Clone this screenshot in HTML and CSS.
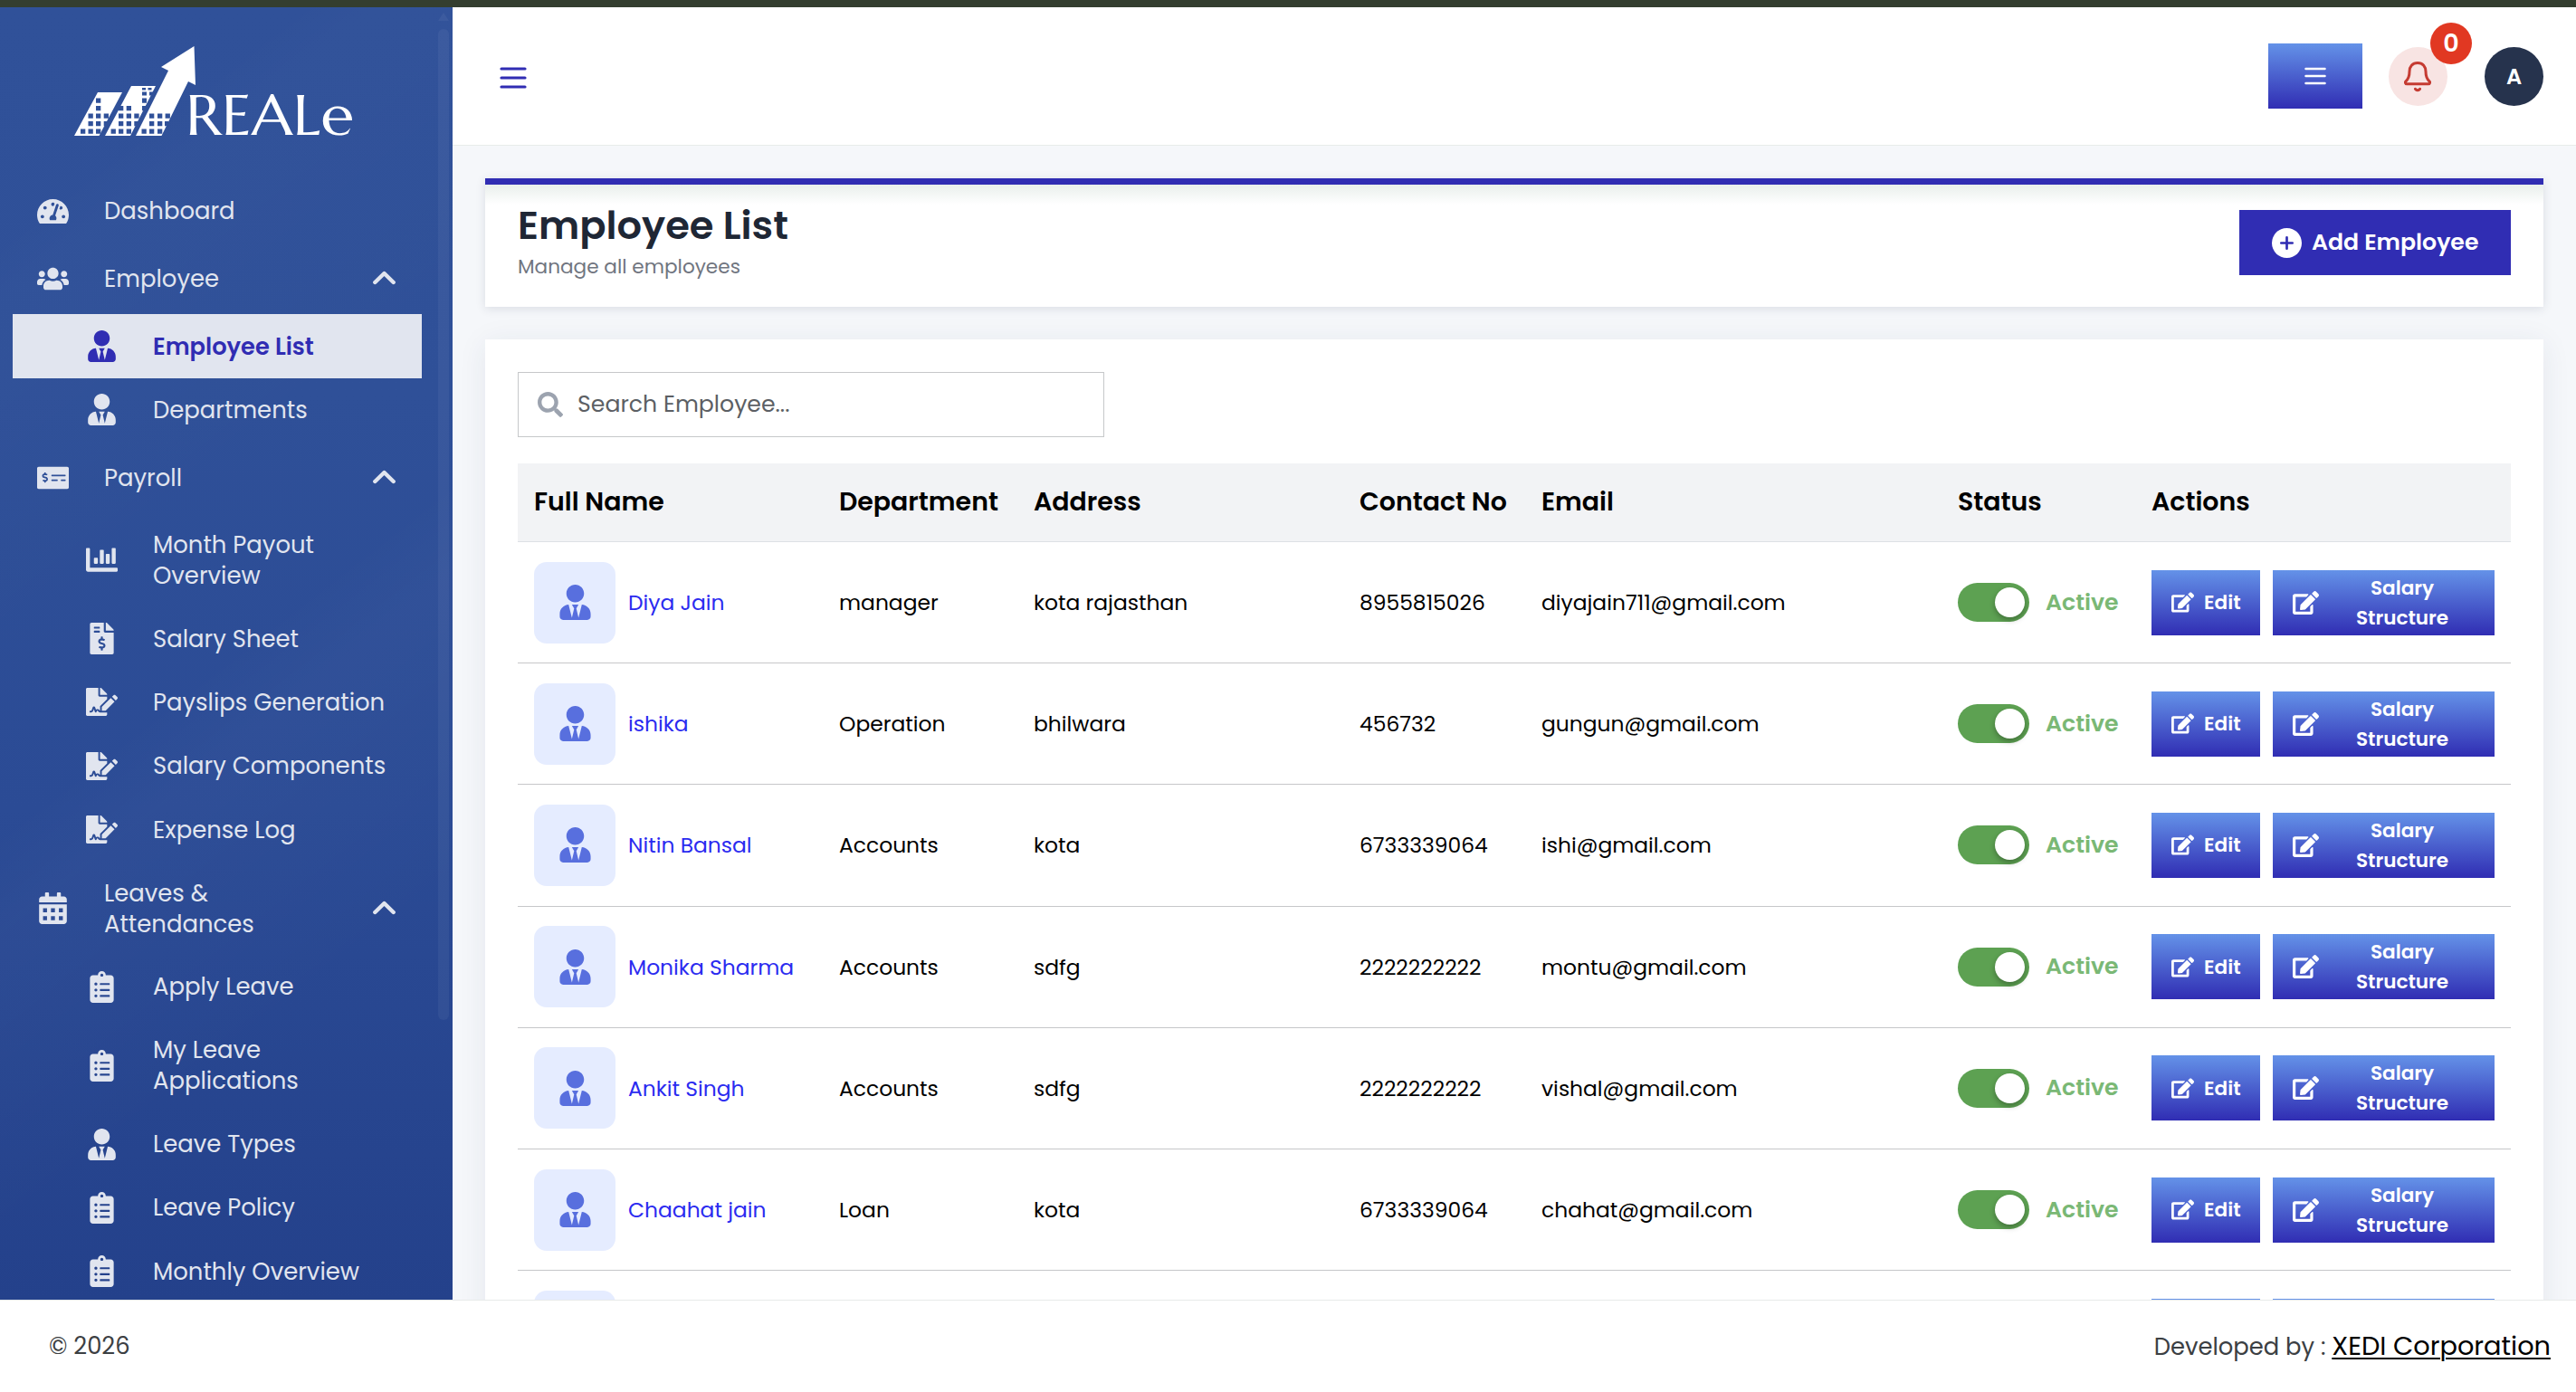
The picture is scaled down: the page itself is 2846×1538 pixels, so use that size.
FILE: index.html
```
<!DOCTYPE html>
<html lang="en">
<head>
    <meta charset="UTF-8">
    <meta name="viewport" content="width=device-width, initial-scale=1.0">
    <title>Employee List</title>
    <link rel="stylesheet" href="styles.css">
</head>
<body>
    <!-- Icon set -->
    <svg class="icon-defs" xmlns="http://www.w3.org/2000/svg">
        <symbol id="i-gauge" viewBox="0 0 576 512"><path d="M288 32C128.94 32 0 160.94 0 320c0 52.8 14.25 102.26 39.06 144.8 5.61 9.62 16.3 15.2 27.44 15.2h443c11.14 0 21.83-5.58 27.44-15.2C561.75 422.26 576 372.8 576 320c0-159.06-128.94-288-288-288zm0 64c14.71 0 26.58 10.13 30.32 23.65-1.11 2.26-2.64 4.23-3.45 6.67l-9.22 27.67c-5.13 3.49-10.97 6.01-17.64 6.01-17.67 0-32-14.33-32-32S270.33 96 288 96zM96 384c-17.67 0-32-14.33-32-32s14.33-32 32-32 32 14.33 32 32-14.33 32-32 32zm48-160c-17.67 0-32-14.33-32-32s14.33-32 32-32 32 14.33 32 32-14.33 32-32 32zm246.77-72.41l-61.33 184C343.13 347.33 352 364.54 352 384c0 11.72-3.38 22.55-8.88 32H232.88c-5.5-9.45-8.88-20.28-8.88-32 0-33.94 26.5-61.43 59.9-63.59l61.34-184.01c4.17-12.56 17.73-19.45 30.36-15.17 12.57 4.19 19.35 17.79 15.17 30.36zm14.66 57.2l15.52-46.55c3.47-1.29 7.13-2.23 11.05-2.23 17.67 0 32 14.33 32 32s-14.33 32-32 32c-11.38-.01-20.89-6.28-26.57-15.22zM480 384c-17.67 0-32-14.33-32-32s14.33-32 32-32 32 14.33 32 32-14.33 32-32 32z"/></symbol>
        <symbol id="i-users" viewBox="0 0 640 512"><path d="M96 224c35.3 0 64-28.7 64-64s-28.7-64-64-64-64 28.7-64 64 28.7 64 64 64zm448 0c35.3 0 64-28.7 64-64s-28.7-64-64-64-64 28.7-64 64 28.7 64 64 64zm32 32h-64c-17.6 0-33.5 7.1-45.1 18.6 40.3 22.1 68.9 62 75.1 109.4h66c17.7 0 32-14.3 32-32v-32c0-35.3-28.7-64-64-64zm-256 0c61.9 0 112-50.1 112-112S381.9 32 320 32 208 82.1 208 144s50.1 112 112 112zm76.8 32h-8.3c-20.8 10-43.9 16-68.5 16s-47.6-6-68.5-16h-8.3C179.6 288 128 339.6 128 403.2V432c0 26.5 21.5 48 48 48h288c26.5 0 48-21.5 48-48v-28.8c0-63.6-51.6-115.2-115.2-115.2zm-223.7-13.4C161.5 263.1 145.6 256 128 256H64c-35.3 0-64 28.7-64 64v32c0 17.7 14.3 32 32 32h65.9c6.3-47.4 34.9-87.3 75.2-109.4z"/></symbol>
        <symbol id="i-user" viewBox="0 0 448 512"><path d="M224 256c70.7 0 128-57.3 128-128S294.7 0 224 0 96 57.3 96 128s57.3 128 128 128zm95.8 32.6L272 480l-32-136 32-56h-96l32 56-32 136-47.8-191.4C56.9 292 0 350.3 0 422.4V464c0 26.5 21.5 48 48 48h352c26.5 0 48-21.5 48-48v-41.6c0-72.1-56.9-130.4-128.2-133.8z"/></symbol>
        <symbol id="i-check" viewBox="0 0 640 512"><path d="M608 32H32C14.33 32 0 46.33 0 64v384c0 17.67 14.33 32 32 32h576c17.67 0 32-14.33 32-32V64c0-17.67-14.33-32-32-32zM176 327.88V344c0 4.42-3.58 8-8 8h-16c-4.42 0-8-3.58-8-8v-16.29c-11.29-.58-22.27-4.52-31.37-11.35-3.9-2.93-4.1-8.77-.57-12.14l11.75-11.21c2.77-2.64 6.89-2.76 10.13-.73 3.87 2.42 8.26 3.72 12.82 3.72h28.11c6.5 0 11.8-5.92 11.8-13.19 0-5.95-3.61-11.19-8.77-12.73l-45-13.5c-18.59-5.58-31.58-23.42-31.58-43.39 0-24.52 19.05-44.44 42.67-45.07V152c0-4.42 3.58-8 8-8h16c4.42 0 8 3.58 8 8v16.29c11.29.58 22.27 4.51 31.37 11.35 3.9 2.93 4.1 8.77.57 12.14l-11.75 11.21c-2.77 2.64-6.89 2.76-10.13.73-3.87-2.43-8.26-3.72-12.82-3.72h-28.11c-6.5 0-11.8 5.92-11.8 13.19 0 5.95 3.61 11.19 8.77 12.73l45 13.5c18.59 5.58 31.58 23.42 31.58 43.39 0 24.53-19.05 44.44-42.67 45.07zM416 312c0 4.42-3.58 8-8 8H296c-4.42 0-8-3.58-8-8v-16c0-4.42 3.58-8 8-8h112c4.42 0 8 3.58 8 8v16zm160 0c0 4.42-3.58 8-8 8h-80c-4.42 0-8-3.58-8-8v-16c0-4.42 3.58-8 8-8h80c4.42 0 8 3.58 8 8v16zm0-96c0 4.42-3.58 8-8 8H296c-4.42 0-8-3.58-8-8v-16c0-4.42 3.58-8 8-8h272c4.42 0 8 3.58 8 8v16z"/></symbol>
        <symbol id="i-chart" viewBox="0 0 512 512"><path d="M332.8 320h38.4c6.4 0 12.8-6.4 12.8-12.8V172.8c0-6.4-6.4-12.8-12.8-12.8h-38.4c-6.4 0-12.8 6.4-12.8 12.8v134.4c0 6.4 6.4 12.8 12.8 12.8zm96 0h38.4c6.4 0 12.8-6.4 12.8-12.8V76.8c0-6.4-6.4-12.8-12.8-12.8h-38.4c-6.4 0-12.8 6.4-12.8 12.8v230.4c0 6.4 6.4 12.8 12.8 12.8zm-288 0h38.4c6.4 0 12.8-6.4 12.8-12.8v-70.4c0-6.4-6.4-12.8-12.8-12.8h-38.4c-6.4 0-12.8 6.4-12.8 12.8v70.4c0 6.4 6.4 12.8 12.8 12.8zm96 0h38.4c6.4 0 12.8-6.4 12.8-12.8V108.8c0-6.4-6.4-12.8-12.8-12.8h-38.4c-6.4 0-12.8 6.4-12.8 12.8v198.4c0 6.4 6.4 12.8 12.8 12.8zM496 384H64V80c0-8.84-7.16-16-16-16H16C7.16 64 0 71.16 0 80v336c0 17.67 14.33 32 32 32h464c8.84 0 16-7.16 16-16v-32c0-8.84-7.16-16-16-16z"/></symbol>
        <symbol id="i-invoice" viewBox="0 0 384 512"><path d="M377 105L279.1 7c-4.5-4.5-10.6-7-17-7H256v128h128v-6.1c0-6.3-2.5-12.4-7-16.9zm-153 31V0H24C10.7 0 0 10.7 0 24v464c0 13.3 10.7 24 24 24h336c13.3 0 24-10.7 24-24V160H248c-13.2 0-24-10.8-24-24zM64 72c0-4.42 3.58-8 8-8h80c4.42 0 8 3.58 8 8v16c0 4.42-3.58 8-8 8H72c-4.42 0-8-3.58-8-8V72zm0 80v-16c0-4.42 3.58-8 8-8h80c4.42 0 8 3.58 8 8v16c0 4.42-3.58 8-8 8H72c-4.42 0-8-3.58-8-8zm144 263.88V440c0 4.42-3.58 8-8 8h-16c-4.42 0-8-3.58-8-8v-24.29c-11.29-.58-22.27-4.52-31.37-11.35-3.9-2.93-4.1-8.77-.57-12.14l11.75-11.21c2.77-2.64 6.89-2.76 10.13-.73 3.87 2.42 8.26 3.72 12.82 3.72h28.11c6.5 0 11.8-5.92 11.8-13.19 0-5.95-3.61-11.19-8.77-12.73l-45-13.5c-18.59-5.58-31.58-23.42-31.58-43.39 0-24.52 19.05-44.44 42.67-45.07V232c0-4.42 3.58-8 8-8h16c4.42 0 8 3.58 8 8v24.29c11.29.58 22.27 4.51 31.37 11.35 3.9 2.93 4.1 8.77.57 12.14l-11.75 11.21c-2.77 2.64-6.89 2.76-10.13.73-3.87-2.43-8.26-3.72-12.82-3.72h-28.11c-6.5 0-11.8 5.92-11.8 13.19 0 5.95 3.61 11.19 8.77 12.73l45 13.5c18.59 5.58 31.58 23.42 31.58 43.39 0 24.53-19.05 44.44-42.67 45.07z"/></symbol>
        <symbol id="i-sign" viewBox="0 0 576 512"><path d="M218.17 424.14c-2.95-5.92-8.09-6.52-10.17-6.52s-7.22.59-10.02 6.19l-7.67 15.34c-6.37 12.78-25.03 11.37-29.48-2.09L144 386.59l-10.61 31.88c-5.89 17.66-22.38 29.53-41 29.53H80c-8.84 0-16-7.16-16-16s7.16-16 16-16h12.39c4.83 0 9.11-3.08 10.64-7.66l18.19-54.64c3.3-9.81 12.44-16.41 22.78-16.41s19.48 6.59 22.77 16.41l13.88 41.64c19.75-16.19 54.06-9.7 66 14.16 1.89 3.78 5.49 5.95 9.36 6.26v-82.12l128-127.09V160H248c-13.2 0-24-10.8-24-24V0H24C10.7 0 0 10.7 0 24v464c0 13.3 10.7 24 24 24h336c13.3 0 24-10.7 24-24v-40l-128-.11c-16.12-.31-30.58-9.28-37.83-23.75zM384 121.9c0-6.3-2.5-12.4-7-16.9L279.1 7c-4.5-4.5-10.6-7-17-7H256v128h128v-6.1zm-96 225.06V416h68.99l161.68-162.78-67.88-67.88L288 346.96zm280.54-179.63l-31.87-31.87c-9.94-9.94-26.07-9.94-36.01 0l-27.25 27.25 67.88 67.88 27.25-27.25c9.95-9.94 9.95-26.07 0-36.01z"/></symbol>
        <symbol id="i-calendar" viewBox="0 0 448 512"><path d="M0 464c0 26.5 21.5 48 48 48h352c26.5 0 48-21.5 48-48V192H0v272zM320 256h64v64h-64zM320 384h64v64h-64zM192 256h64v64h-64zM192 384h64v64h-64zM64 256h64v64H64zM64 384h64v64H64zM400 64h-48V16c0-8.8-7.2-16-16-16h-32c-8.8 0-16 7.2-16 16v48H160V16c0-8.8-7.2-16-16-16h-32c-8.8 0-16 7.2-16 16v48H48C21.5 64 0 85.5 0 112v48h448v-48c0-26.5-21.5-48-48-48z" fill-rule="evenodd"/></symbol>
        <symbol id="i-clipboard" viewBox="0 0 384 512"><path d="M336 64h-80c0-35.3-28.7-64-64-64s-64 28.7-64 64H48C21.5 64 0 85.5 0 112v352c0 26.5 21.5 48 48 48h288c26.5 0 48-21.5 48-48V112c0-26.5-21.5-48-48-48zM96 424c-13.3 0-24-10.7-24-24s10.7-24 24-24 24 10.7 24 24-10.7 24-24 24zm0-96c-13.3 0-24-10.7-24-24s10.7-24 24-24 24 10.7 24 24-10.7 24-24 24zm0-96c-13.3 0-24-10.7-24-24s10.7-24 24-24 24 10.7 24 24-10.7 24-24 24zm96-192c13.3 0 24 10.7 24 24s-10.7 24-24 24-24-10.7-24-24 10.7-24 24-24zm128 368c0 4.4-3.6 8-8 8H168c-4.4 0-8-3.6-8-8v-16c0-4.4 3.6-8 8-8h144c4.4 0 8 3.6 8 8v16zm0-96c0 4.4-3.6 8-8 8H168c-4.4 0-8-3.6-8-8v-16c0-4.4 3.6-8 8-8h144c4.4 0 8 3.6 8 8v16zm0-96c0 4.4-3.6 8-8 8H168c-4.4 0-8-3.6-8-8v-16c0-4.4 3.6-8 8-8h144c4.4 0 8 3.6 8 8v16z"/></symbol>
        <symbol id="i-edit" viewBox="0 0 576 512"><path d="M402.6 83.2l90.2 90.2c3.8 3.8 3.8 10 0 13.8L274.4 405.6l-92.8 10.3c-12.4 1.4-22.9-9.1-21.5-21.5l10.3-92.8L388.8 83.2c3.8-3.8 10-3.8 13.8 0zm162-22.9l-48.8-48.8c-15.2-15.2-39.9-15.2-55.2 0l-35.4 35.4c-3.8 3.8-3.8 10 0 13.8l90.2 90.2c3.8 3.8 10 3.8 13.8 0l35.4-35.4c15.2-15.3 15.2-40 0-55.2zM384 346.2V448H64V128h229.8c3.2 0 6.2-1.3 8.5-3.5l40-40c7.6-7.6 2.2-20.5-8.5-20.5H48C21.5 64 0 85.5 0 112v352c0 26.5 21.5 48 48 48h352c26.5 0 48-21.5 48-48V306.2c0-10.7-12.9-16-20.5-8.5l-40 40c-2.2 2.3-3.5 5.3-3.5 8.5z"/></symbol>
        <symbol id="i-search" viewBox="0 0 512 512"><path d="M505 442.7L405.3 343c-4.5-4.5-10.6-7-17-7H372c27.6-35.3 44-79.7 44-128C416 93.1 322.9 0 208 0S0 93.1 0 208s93.1 208 208 208c48.3 0 92.7-16.4 128-44v16.3c0 6.4 2.5 12.5 7 17l99.7 99.7c9.4 9.4 24.6 9.4 33.9 0l28.3-28.3c9.4-9.4 9.4-24.6.1-34zM208 336c-70.7 0-128-57.2-128-128 0-70.7 57.2-128 128-128 70.7 0 128 57.2 128 128 0 70.7-57.2 128-128 128z"/></symbol>
        <symbol id="i-chevron" viewBox="0 0 25 16"><path d="M2.3 13 12.5 3l10.2 10" fill="none" stroke="currentColor" stroke-width="4.4" stroke-linejoin="round" stroke-linecap="round"/></symbol>
    </svg>

    <div class="layout">
        <aside class="sidebar">
            <svg class="logo" viewBox="80 40 330 120">
                <path d="M214.5 51 216 94l-8-4-29.5 60H150l36-72-8-4z"/>
                <path d="M108 102h27l-25.5 48H82zM145 95h27l-28 55h-28z"/>
                <g class="logo-windows">
                    <path d="M106 108.5h5.3v5.3H106zM106 117h5.3v5.3H106zM97.5 125.5h5.3v5.3h-5.3zM106 125.5h5.3v5.3H106zM114.7 125.5h5.3v5.3h-5.3zM97.5 134h5.3v5.3h-5.3zM106 134h5.3v5.3H106zM114.7 134h4v5.3h-4zM89 142.5h5.3v5.3H89zM97.5 142.5h5.3v5.3h-5.3zM106 142.5h5.3v5.3H106z"/>
                    <path d="M131 117h5.3v5.3H131zM139.7 117h5.3v5.3h-5.3zM131 125.5h5.3v5.3H131zM139.7 125.5h5.3v5.3h-5.3zM148.3 125.5h5.3v5.3h-5.3zM131 134h5.3v5.3H131zM139.7 134h5.3v5.3h-5.3zM148.3 134h4v5.3h-4zM122.6 142.5h5.3v5.3h-5.3zM131 142.5h5.3v5.3H131zM139.7 142.5h5.3v5.3h-5.3z"/>
                    <path d="M157 97h4v2.4h-4zM163.5 97h4v2.4h-4zM157 101.5h5v4h-5zM157 108.5h5v5.3h-5zM165 101.5h5v4h-5zM157 117h4.500v5.3H157z"/>
                    <path d="M165 125.5h5.3v5.3H165zM174 125.5h5.3v5.3H174zM182.600 125.5h5.3v5.3h-5.3zM165 134h5.3v5.3H165zM174 134h5.3v5.3H174zM182 134h4v5.3h-4zM156.500 142.5h5.3v5.3h-5.3zM165 142.5h5.3v5.3H165zM174 142.5h5.3v5.3H174z"/>
                </g>
                <text x="205" y="149" textLength="186" lengthAdjust="spacingAndGlyphs">REALe</text>
            </svg>

            <nav class="menu">
                <a class="item"><svg class="ic w35"><use href="#i-gauge"/></svg><span>Dashboard</span></a>
                <a class="item"><svg class="ic w35 h28"><use href="#i-users"/></svg><span>Employee</span><svg class="chev"><use href="#i-chevron"/></svg></a>
                <div class="sub">
                    <a class="item active"><svg class="ic w31"><use href="#i-user"/></svg><span>Employee List</span></a>
                    <a class="item"><svg class="ic w31"><use href="#i-user"/></svg><span>Departments</span></a>
                </div>
                <a class="item"><svg class="ic w35 h28"><use href="#i-check"/></svg><span>Payroll</span><svg class="chev"><use href="#i-chevron"/></svg></a>
                <div class="sub">
                    <a class="item"><svg class="ic w35"><use href="#i-chart"/></svg><span>Month Payout Overview</span></a>
                    <a class="item"><svg class="ic w27"><use href="#i-invoice"/></svg><span>Salary Sheet</span></a>
                    <a class="item"><svg class="ic w35"><use href="#i-sign"/></svg><span>Payslips Generation</span></a>
                    <a class="item"><svg class="ic w35"><use href="#i-sign"/></svg><span>Salary Components</span></a>
                    <a class="item"><svg class="ic w35"><use href="#i-sign"/></svg><span>Expense Log</span></a>
                </div>
                <a class="item two"><svg class="ic w31"><use href="#i-calendar"/></svg><span>Leaves &amp; Attendances</span><svg class="chev"><use href="#i-chevron"/></svg></a>
                <div class="sub">
                    <a class="item"><svg class="ic w27"><use href="#i-clipboard"/></svg><span>Apply Leave</span></a>
                    <a class="item"><svg class="ic w27"><use href="#i-clipboard"/></svg><span>My Leave Applications</span></a>
                    <a class="item"><svg class="ic w31"><use href="#i-user"/></svg><span>Leave Types</span></a>
                    <a class="item"><svg class="ic w27"><use href="#i-clipboard"/></svg><span>Leave Policy</span></a>
                    <a class="item"><svg class="ic w27"><use href="#i-clipboard"/></svg><span>Monthly Overview</span></a>
                </div>
            </nav>
            <div class="scroll-arrow"></div>
            <div class="scroll-thumb"></div>
        </aside>

        <main>
            <header class="topbar">
                <svg class="burger" viewBox="0 0 30 24"><path d="M2 2h26M2 12h26M2 22h26"/></svg>
                <div class="topbar-right">
                    <button class="menu-btn"><svg viewBox="0 0 24 20"><path d="M1.500 2h21M1.500 10h21M1.500 18h21"/></svg></button>
                    <div class="bell">
                        <svg viewBox="0 0 30 34"><path d="M15 1.500c-5.800 0-9 4.300-9 9.500 0 6.500-1.600 8.600-4 10.800-1 1-.6 3 1.200 3h23.600c1.800 0 2.200-2 1.200-3-2.400-2.200-4-4.300-4-10.800 0-5.200-3.200-9.500-9-9.500zM12.500 30.300c1.300 1.900 3.700 1.900 5 0"/></svg>
                        <span class="badge">0</span>
                    </div>
                    <div class="avatar">A</div>
                </div>
            </header>

            <section class="page-head">
                <div>
                    <h1>Employee List</h1>
                    <p>Manage all employees</p>
                </div>
                <button class="add-btn"><svg viewBox="0 0 32 32"><circle cx="16" cy="16" r="16"/><path d="M16 10v12M10 16h12"/></svg>Add Employee</button>
            </section>

            <section class="card">
                <div class="search"><svg><use href="#i-search"/></svg><span>Search Employee...</span></div>
                <table>
                    <colgroup><col class="c-name"><col class="c-dept"><col class="c-addr"><col class="c-phone"><col class="c-mail"><col class="c-status"><col class="c-act"></colgroup>
                    <thead>
                        <tr><th>Full Name</th><th>Department</th><th>Address</th><th>Contact No</th><th>Email</th><th>Status</th><th>Actions</th></tr>
                    </thead>
                    <tbody>
                        <tr>
                            <td><div class="name"><span class="pic"><svg><use href="#i-user"/></svg></span>Diya Jain</div></td>
                            <td>manager</td><td>kota rajasthan</td><td>8955815026</td><td>diyajain711@gmail.com</td>
                            <td><div class="status"><span class="toggle"></span>Active</div></td>
                            <td><div class="actions"><button class="edit"><svg><use href="#i-edit"/></svg>Edit</button><button class="salary"><svg><use href="#i-edit"/></svg><span>Salary Structure</span></button></div></td>
                        </tr>
                        <tr>
                            <td><div class="name"><span class="pic"><svg><use href="#i-user"/></svg></span>ishika</div></td>
                            <td>Operation</td><td>bhilwara</td><td>456732</td><td>gungun@gmail.com</td>
                            <td><div class="status"><span class="toggle"></span>Active</div></td>
                            <td><div class="actions"><button class="edit"><svg><use href="#i-edit"/></svg>Edit</button><button class="salary"><svg><use href="#i-edit"/></svg><span>Salary Structure</span></button></div></td>
                        </tr>
                        <tr>
                            <td><div class="name"><span class="pic"><svg><use href="#i-user"/></svg></span>Nitin Bansal</div></td>
                            <td>Accounts</td><td>kota</td><td>6733339064</td><td>ishi@gmail.com</td>
                            <td><div class="status"><span class="toggle"></span>Active</div></td>
                            <td><div class="actions"><button class="edit"><svg><use href="#i-edit"/></svg>Edit</button><button class="salary"><svg><use href="#i-edit"/></svg><span>Salary Structure</span></button></div></td>
                        </tr>
                        <tr>
                            <td><div class="name"><span class="pic"><svg><use href="#i-user"/></svg></span>Monika Sharma</div></td>
                            <td>Accounts</td><td>sdfg</td><td>2222222222</td><td>montu@gmail.com</td>
                            <td><div class="status"><span class="toggle"></span>Active</div></td>
                            <td><div class="actions"><button class="edit"><svg><use href="#i-edit"/></svg>Edit</button><button class="salary"><svg><use href="#i-edit"/></svg><span>Salary Structure</span></button></div></td>
                        </tr>
                        <tr>
                            <td><div class="name"><span class="pic"><svg><use href="#i-user"/></svg></span>Ankit Singh</div></td>
                            <td>Accounts</td><td>sdfg</td><td>2222222222</td><td>vishal@gmail.com</td>
                            <td><div class="status"><span class="toggle"></span>Active</div></td>
                            <td><div class="actions"><button class="edit"><svg><use href="#i-edit"/></svg>Edit</button><button class="salary"><svg><use href="#i-edit"/></svg><span>Salary Structure</span></button></div></td>
                        </tr>
                        <tr>
                            <td><div class="name"><span class="pic"><svg><use href="#i-user"/></svg></span>Chaahat jain</div></td>
                            <td>Loan</td><td>kota</td><td>6733339064</td><td>chahat@gmail.com</td>
                            <td><div class="status"><span class="toggle"></span>Active</div></td>
                            <td><div class="actions"><button class="edit"><svg><use href="#i-edit"/></svg>Edit</button><button class="salary"><svg><use href="#i-edit"/></svg><span>Salary Structure</span></button></div></td>
                        </tr>
                        <tr>
                            <td><div class="name"><span class="pic"></span></div></td>
                            <td></td><td></td><td></td><td></td><td></td>
                            <td><div class="actions"><button class="edit"></button><button class="salary"></button></div></td>
                        </tr>
                    </tbody>
                </table>
            </section>
        </main>
    </div>

    <footer>
        <span>© 2026</span>
        <span>Developed by : <a>XEDI Corporation</a></span>
    </footer>
</body>
</html>
```
FILE: styles.css
```
* {
    margin: 0;
    padding: 0;
    box-sizing: border-box;
}

body {
    height: 100vh;
    display: flex;
    flex-direction: column;
    overflow: hidden;
    border-top: 8px solid #343e2f;
    background: #f5f7fa;
    color: #000;
    font-family: Poppins, Inter, sans-serif;
}

button {
    border: none;
    font-family: inherit;
    color: #fff;
}

.icon-defs {
    display: none;
}

.layout {
    height: 1428px;
    flex: none;
    display: flex;
    overflow: hidden;
}

/* Sidebar */
.sidebar {
    position: relative;
    flex: none;
    width: 500px;
    overflow: hidden;
    color: #e1e5ef;
    background:
        linear-gradient(142deg, rgba(255,255,255,0) 14%, rgba(255,255,255,0.01) 18%, rgba(255,255,255,0) 42%, rgba(255,255,255,0) 50%, rgba(255,255,255,0.018) 56%, rgba(255,255,255,0) 76%),
        linear-gradient(#305199, #2f5098 30%, #2b4b95 62%, #24418b);
}

.logo {
    display: block;
    width: 330px;
    height: 120px;
    margin: 32px 0 0 80px;
    overflow: visible;
    fill: #fff;
}

.logo-windows {
    fill: #305199;
}

.logo text {
    font-family: Marcellus, Optima, Lato, sans-serif;
    font-size: 63px;
}

.menu {
    margin-top: 38px;
    padding: 0 34px 0 14px;
}

.item {
    display: flex;
    align-items: center;
    min-height: 70.5px;
    margin-bottom: 4.2px;
    padding-left: 26px;
    font-size: 25.9px;
    line-height: 34px;
}

.item.two {
    min-height: 99px;
}

.item.two span {
    width: 200px;
}

.sub .item {
    margin-bottom: 0;
    padding: 17.7px 20px 17.7px 80px;
    min-height: 0;
}

.sub {
    margin-bottom: 4.2px;
}

.sub + .item.two {
    margin-top: -2px;
    margin-bottom: 2px;
}

.item.active {
    background: #e1e5ef;
    color: #302db3;
    font-weight: 600;
    font-size: 25.7px;
}

.ic {
    flex: none;
    height: 35px;
    fill: currentColor;
}

.w35 {
    width: 35px;
    margin: 0 39px 0 1px;
}

.h28 {
    height: 28px;
}

.w31 {
    width: 31px;
    margin: 0 41px 0 3px;
}

.w27 {
    width: 27px;
    margin: 0 43px 0 5px;
}

.chev {
    width: 25px;
    height: 16px;
    margin: 0 29px 2px auto;
}

.scroll-thumb,
.scroll-arrow {
    position: absolute;
    right: 4px;
}

.scroll-arrow {
    top: 6px;
    border: 6px solid transparent;
    border-top: none;
    border-bottom: 9px solid rgba(255,255,255,0.05);
}

.scroll-thumb {
    top: 24px;
    width: 12px;
    height: 1095px;
    border-radius: 6px;
    background: rgba(255,255,255,0.05);
}

/* Top bar */
main {
    flex: 1;
    min-width: 0;
}

.topbar {
    height: 153px;
    display: flex;
    justify-content: space-between;
    padding: 40px 36px 0 52px;
    background: #fff;
    border-bottom: 1px solid #e8ecea;
}

.burger {
    width: 30px;
    height: 24px;
    margin-top: 26px;
    stroke: #302db3;
    stroke-width: 3.2;
    stroke-linecap: round;
}

.topbar-right {
    display: flex;
    align-items: flex-start;
}

.menu-btn,
.actions button {
    background: linear-gradient(#6492e8, #302db3);
}

.menu-btn {
    display: flex;
    align-items: center;
    justify-content: center;
    width: 104px;
    height: 72px;
    margin-right: 29px;
}

.menu-btn svg {
    width: 24px;
    height: 20px;
    stroke: #fff;
    stroke-width: 2.5;
    stroke-linecap: round;
}

.bell,
.avatar {
    position: relative;
    display: flex;
    align-items: center;
    justify-content: center;
    width: 65px;
    height: 65px;
    margin-top: 4px;
    border-radius: 50%;
}

.bell {
    margin-right: 41px;
    background: #f8e4e3;
}

.bell svg {
    width: 30px;
    height: 34px;
    margin-right: 1px;
    fill: none;
    stroke: #c53b32;
    stroke-width: 3;
    stroke-linecap: round;
}

.badge {
    position: absolute;
    top: -27px;
    right: -27px;
    width: 46px;
    height: 46px;
    border-radius: 50%;
    background: #e13822;
    color: #fff;
    font-size: 27px;
    font-weight: 600;
    line-height: 46px;
    text-align: center;
}

.avatar {
    background: #26334d;
    color: #fff;
    font-size: 24px;
    font-weight: 600;
}

/* Page header */
.page-head {
    display: flex;
    align-items: flex-start;
    justify-content: space-between;
    height: 142px;
    margin: 36px 36px 0;
    padding: 21px 36px 0;
    border-top: 7px solid #302db3;
    background: linear-gradient(#e9efec, #fff 22px);
    box-shadow: 0 2px 10px rgba(40,50,80,0.13);
}

h1 {
    color: #1f2735;
    font-size: 43.2px;
    font-weight: 600;
    line-height: 48px;
}

.page-head p {
    margin-top: 7px;
    color: #70757f;
    font-size: 21.6px;
    line-height: 30px;
}

.add-btn {
    display: flex;
    align-items: center;
    gap: 11px;
    width: 300px;
    height: 72px;
    margin-top: 7px;
    padding-left: 36px;
    background: #302db3;
    font-size: 25.2px;
    font-weight: 600;
    white-space: nowrap;
}

.add-btn svg {
    flex: none;
    width: 33px;
    height: 33px;
    fill: #fff;
    stroke: #302db3;
    stroke-width: 2.6;
    stroke-linecap: round;
}

.add-btn circle {
    stroke: none;
}

/* Employee table */
.card {
    height: 1200px;
    margin: 36px 36px 0;
    padding: 36px;
    background: #fff;
    box-shadow: 0 4px 30px rgba(40,50,90,0.08);
}

.search {
    display: flex;
    align-items: center;
    gap: 16px;
    width: 648px;
    height: 72px;
    margin-bottom: 29px;
    padding-left: 21px;
    border: 1px solid #c6c8ca;
    color: #5c5f64;
    font-size: 25.2px;
}

.search svg {
    width: 28px;
    height: 28px;
    fill: #9ca3af;
}

table {
    width: 2202px;
    table-layout: fixed;
    border-spacing: 0;
}

.c-name { width: 337px; }
.c-dept { width: 215px; }
.c-addr { width: 360px; }
.c-phone { width: 201px; }
.c-mail { width: 460px; }
.c-status { width: 214px; }
.c-act { width: 415px; }

th {
    height: 87px;
    padding: 0 0 2px 18px;
    background: #f2f3f5;
    border-bottom: 1px solid #dde0e5;
    font-size: 28.4px;
    font-weight: 600;
    text-align: left;
    white-space: nowrap;
}

td {
    height: 134.2px;
    padding-left: 18px;
    border-bottom: 1px solid #c6c7c9;
    font-size: 23.4px;
}

.name {
    display: flex;
    align-items: center;
    gap: 14px;
    color: #2b2bf0;
}

.pic {
    display: flex;
    align-items: center;
    justify-content: center;
    width: 90px;
    height: 90px;
    border-radius: 14px;
    background: #e5ecff;
}

.pic svg {
    width: 35px;
    height: 39px;
    fill: #586fde;
}

.status {
    display: flex;
    align-items: center;
    gap: 18px;
    color: #7ab875;
    font-size: 25.2px;
    font-weight: 600;
}

.toggle {
    width: 79px;
    height: 43px;
    padding: 5px;
    border-radius: 22px;
    background: #5da152;
}

.toggle::after {
    content: "";
    display: block;
    width: 33px;
    height: 33px;
    margin-left: auto;
    border-radius: 50%;
    background: #fff;
    box-shadow: 0 3px 6px rgba(0,0,0,0.3);
}

.actions {
    display: flex;
    gap: 14px;
}

.actions button {
    display: flex;
    align-items: center;
    height: 72px;
    padding-left: 22px;
    font-size: 21.6px;
    font-weight: 600;
    line-height: 33px;
}

.actions svg {
    flex: none;
    fill: #fff;
}

.actions .edit {
    width: 120px;
    gap: 11px;
}

.edit svg {
    width: 25px;
    height: 23px;
}

.actions .salary {
    width: 245px;
}

.salary svg {
    width: 29px;
    height: 26px;
}

.salary span {
    width: 110px;
    margin-left: 37px;
    text-align: center;
}

/* Footer */
footer {
    flex: 1;
    display: flex;
    align-items: center;
    justify-content: space-between;
    padding: 0 28px 0 54px;
    border-top: 1px solid #e7eae9;
    background: #fff;
    color: #3c4043;
    font-size: 25.8px;
}

footer a {
    color: #000;
    font-size: 28.8px;
    text-decoration: underline;
    text-underline-offset: 3px;
    text-decoration-thickness: 2px;
}
```
